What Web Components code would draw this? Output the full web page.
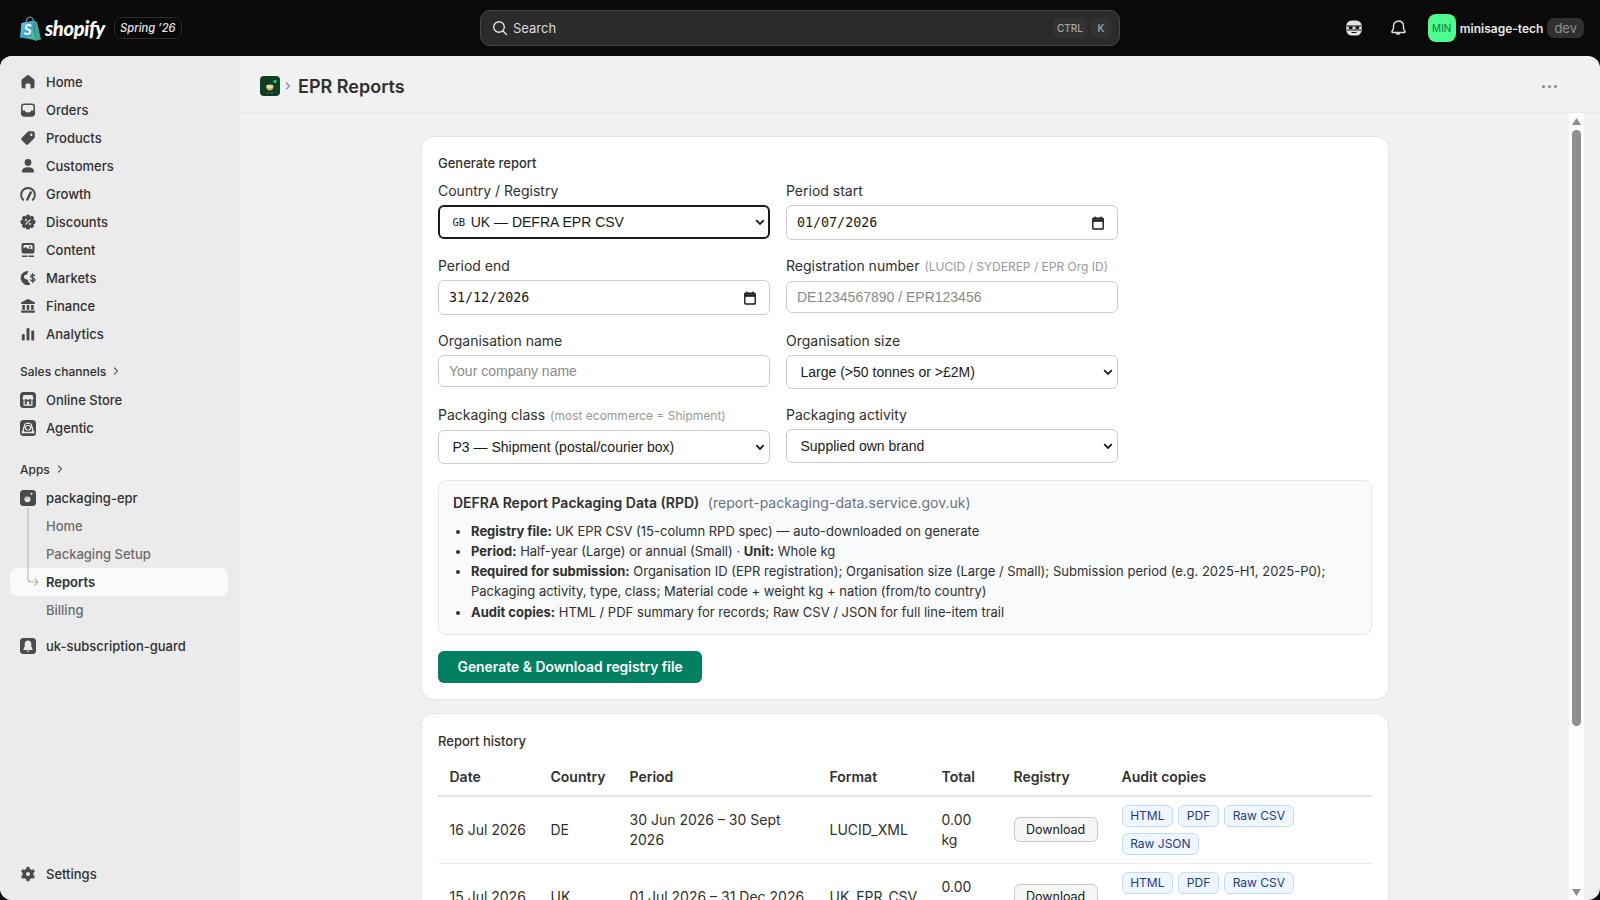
<!DOCTYPE html>
<html lang="en">
<head>
<meta charset="utf-8">
<title>EPR Reports</title>
<style>
  html, body { margin: 0; height: 100%; background: #0a0a0a; overflow: hidden; }
  body { font-family: Inter, "Liberation Sans", sans-serif; color: #303030; }
</style>
</head>
<body>
<admin-shell>
  <admin-topbar slot="top"></admin-topbar>
  <admin-nav slot="nav"></admin-nav>
  <admin-pageheader slot="header" title="EPR Reports"></admin-pageheader>

  <epr-card heading="Generate report">
    <epr-form>
      <epr-field label="Country / Registry"><epr-select focused flag="GB">UK — DEFRA EPR CSV</epr-select></epr-field>
      <epr-field label="Period start"><epr-date>01/07/2026</epr-date></epr-field>
      <epr-field label="Period end"><epr-date>31/12/2026</epr-date></epr-field>
      <epr-field label="Registration number" hint="(LUCID / SYDEREP / EPR Org ID)"><epr-input placeholder="DE1234567890 / EPR123456"></epr-input></epr-field>
      <epr-field label="Organisation name"><epr-input placeholder="Your company name"></epr-input></epr-field>
      <epr-field label="Organisation size"><epr-select>Large (&gt;50 tonnes or &gt;£2M)</epr-select></epr-field>
      <epr-field label="Packaging class" hint="(most ecommerce = Shipment)"><epr-select>P3 — Shipment (postal/courier box)</epr-select></epr-field>
      <epr-field label="Packaging activity"><epr-select>Supplied own brand</epr-select></epr-field>
    </epr-form>
    <epr-info heading="DEFRA Report Packaging Data (RPD)" source="(report-packaging-data.service.gov.uk)">
      <li><b>Registry file:</b> UK EPR CSV (15-column RPD spec) — auto-downloaded on generate</li>
      <li><b>Period:</b> Half-year (Large) or annual (Small) · <b>Unit:</b> Whole kg</li>
      <li><b>Required for submission:</b> Organisation ID (EPR registration); Organisation size (Large / Small); Submission period (e.g. 2025-H1, 2025-P0); Packaging activity, type, class; Material code + weight kg + nation (from/to country)</li>
      <li><b>Audit copies:</b> HTML / PDF summary for records; Raw CSV / JSON for full line-item trail</li>
    </epr-info>
    <epr-primary>Generate &amp; Download registry file</epr-primary>
  </epr-card>

  <epr-card heading="Report history" roomy>
    <epr-history></epr-history>
  </epr-card>
</admin-shell>

<script>
// 20x20 icons for the left nav
const gearTeeth = [0, 60, 120, 180, 240, 300].map(a => `<rect x="8.4" y="2.8" width="3.2" height="3.4" rx=".8" transform="rotate(${a} 10 10)"/>`).join('');
const discountLobes = [0, 45, 90, 135, 180, 225, 270, 315].map(a => `<circle cx="10" cy="4.6" r="2.2" transform="rotate(${a} 10 10)"/>`).join('');
const ICONS = {
  home: `<path d="M8.9 3.4a1.75 1.75 0 0 1 2.2 0l4.75 3.85c.41.33.65.83.65 1.36v5.64a2.25 2.25 0 0 1-2.25 2.25H12.5v-3.5a1.5 1.5 0 0 0-1.5-1.5H9a1.5 1.5 0 0 0-1.5 1.5v3.5H5.75A2.25 2.25 0 0 1 3.5 14.25V8.6c0-.53.24-1.03.65-1.36z"/>`,
  orders: `<rect x="3.75" y="4.25" width="12.5" height="11.5" rx="2.25" fill="none" stroke="currentColor" stroke-width="1.5"/><path d="M3.5 10.5h3.3c.3 1.3 1.6 2 3.2 2s2.9-.7 3.2-2h3.3v3.75a2.25 2.25 0 0 1-2.25 2.25h-8.5a2.25 2.25 0 0 1-2.25-2.25z"/>`,
  products: `<path fill-rule="evenodd" d="M11 3.2h4A1.8 1.8 0 0 1 16.8 5v4c0 .5-.2 1-.55 1.3l-5.9 5.9a1.8 1.8 0 0 1-2.55 0l-4-4a1.8 1.8 0 0 1 0-2.55l5.9-5.9c.35-.35.8-.55 1.3-.55zm2.3 2.3a1.2 1.2 0 1 0 0 2.4 1.2 1.2 0 0 0 0-2.4z"/>`,
  customers: `<circle cx="10" cy="6.4" r="3.4"/><path d="M4 15.2c0-2.4 2.6-3.9 6-3.9s6 1.500 6 3.900c0 .8-.6 1.300-1.300 1.300H5.300C4.600 16.500 4 16 4 15.200z"/>`,
  growth: `<path d="M5.200 15.800a6.900 6.900 0 1 1 9.600 0" fill="none" stroke="currentColor" stroke-width="1.900" stroke-linecap="round"/><path d="M9.300 15.600 12.800 8.400" fill="none" stroke="currentColor" stroke-width="2.400" stroke-linecap="round"/>`,
  discounts: `${discountLobes}<circle cx="10" cy="10" r="5.600"/><path d="M7.900 12.100l4.200-4.200" stroke="#ebebeb" stroke-width="1.200" stroke-linecap="round"/><circle cx="8" cy="8" r="1" fill="#ebebeb"/><circle cx="12" cy="12" r="1" fill="#ebebeb"/>`,
  content: `<path fill-rule="evenodd" d="M5.500 3h9a2 2 0 0 1 2 2v6.500a2 2 0 0 1-2 2h-9a2 2 0 0 1-2-2V5a2 2 0 0 1 2-2zm1 2a1 1 0 0 0-1 1v2.500l2.200-1.500 3 2 1.300-.8 2.500 1.600V6a1 1 0 0 0-1-1z"/><circle cx="11.800" cy="6.800" r=".9"/><path d="M4.500 16.200h4.500M11 16.200h4.500" stroke="currentColor" stroke-width="1.400" stroke-linecap="round"/>`,
  markets: `<path d="M9.500 3a7 7 0 1 0 2.700 13.500l-.5-1.400c-1-.4-1.700-1.300-1.700-2.500 0-.9-.7-1.100-1.600-1.300-1.500-.3-2.400-1.300-2.400-2.600 0-1.200.9-2 2-2 .9 0 1.500-.6 1.500-1.400 0-.7.300-1.300 1-1.700z"/><path d="M16.500 7.800c-.4-.7-1.100-1-1.900-1-1.100 0-1.900.6-1.900 1.500 0 2 4 1 4 3.100 0 .9-.9 1.600-2 1.600-.9 0-1.700-.4-2.100-1.100M14.700 5.600v9" fill="none" stroke="currentColor" stroke-width="1.300" stroke-linecap="round"/>`,
  finance: `<path d="M9.300 3.200a1.500 1.500 0 0 1 1.400 0l5.500 2.700c.5.300.8.700.8 1.300v.8H3v-.8c0-.6.300-1 .8-1.300z"/><rect x="4.300" y="9" width="2.600" height="4.800"/><rect x="8.700" y="9" width="2.600" height="4.800"/><rect x="13.100" y="9" width="2.600" height="4.800"/><rect x="3" y="14.500" width="14" height="2.200" rx=".8"/>`,
  analytics: `<rect x="3.800" y="10" width="2.900" height="6.500" rx="1.300"/><rect x="8.550" y="4" width="2.900" height="12.500" rx="1.300"/><rect x="13.300" y="6.500" width="2.900" height="10" rx=".8"/>`,
  store: `<rect x="2" y="2" width="16" height="16" rx="3.500"/><path d="M5.500 5h9l1 3.200c0 1-.8 1.500-1.700 1.500-.8 0-1.400-.4-1.900-1-.5.600-1.100 1-1.900 1s-1.400-.4-1.900-1c-.5.600-1.100 1-1.900 1-.9 0-1.700-.5-1.700-1.500z" fill="#ebebeb"/><path d="M5.500 10.300h1.200v4.200h2.100v-3h2.400v3h2.100v-4.200h1.200v5.400h-9z" fill="#ebebeb"/>`,
  agentic: `<rect x="2" y="2" width="16" height="16" rx="3.500"/><path d="M7.700 5.400h4.600M7 5.800l-2 7M13 5.800l2 7M6 14.500h8" fill="none" stroke="#ebebeb" stroke-width="1.300"/><rect x="7.500" y="7.500" width="5" height="4.500" rx="2" fill="none" stroke="#ebebeb" stroke-width="1.200"/><circle cx="5" cy="14" r="1.500" fill="#ebebeb"/><circle cx="15" cy="14" r="1.500" fill="#ebebeb"/>`,
  packaging: `<rect x="2" y="2" width="16" height="16" rx="3.500"/><circle cx="13.500" cy="5.800" r="1.100" fill="#ddd"/><path d="M6.300 10.500h6.400c0 2.400-1.300 3.800-3.200 3.800s-3.200-1.400-3.200-3.800z" fill="#ebebeb"/><ellipse cx="9.500" cy="10" rx="3" ry="1.400" fill="#ccc"/>`,
  bellapp: `<rect x="2" y="2" width="16" height="16" rx="3.500"/><path d="M10 4.500c-2 0-3.300 1.500-3.300 3.500v2.500L5.500 13c-.2.500.1 1 .7 1h7.600c.6 0 .9-.5.7-1l-1.200-2.500V8c0-2-1.300-3.500-3.300-3.500z" fill="#ebebeb"/><path d="M8.500 14.800h3c-.2.700-.8 1.100-1.500 1.100s-1.300-.4-1.500-1.100z" fill="#ebebeb"/>`,
  settings: `${gearTeeth}<path fill-rule="evenodd" d="M10 4.500a5.500 5.500 0 1 0 0 11 5.500 5.500 0 0 0 0-11zm0 3.500a2 2 0 1 1 0 4 2 2 0 0 1 0-4z"/>`
};

class AdminShell extends HTMLElement {
  constructor() {
    super();
    this.attachShadow({ mode: 'open' });
    this.shadowRoot.innerHTML = `
      <style>
        :host { display: flex; flex-direction: column; height: 900px; }
        .body { flex: 1; min-height: 0; display: flex; border-radius: 12px; overflow: hidden; background: #f1f1f1; }
        .main { flex: 1; min-width: 0; display: flex; flex-direction: column; }
        .frame { flex: 1; min-height: 0; display: flex; }
        .pane { flex: 1; min-width: 0; overflow: hidden; padding: 24px 181px 0 182px; display: flex; flex-direction: column; gap: 15px; }
        .bar { width: 15px; margin-right: 16px; flex: none; background: #fdfdfd; display: flex; flex-direction: column; align-items: center; }
        .thumb { width: 9px; height: 596px; margin-top: 5px; border-radius: 5px; background: #8f8f8f; }
        .arrow { width: 9px; height: 7px; background: #8f8f8f; flex: none; }
        .up { margin-top: 5px; clip-path: polygon(50% 0, 100% 100%, 0 100%); }
        .down { margin-top: auto; margin-bottom: 4px; clip-path: polygon(0 0, 100% 0, 50% 100%); }
      </style>
      <slot name="top"></slot>
      <div class="body">
        <slot name="nav"></slot>
        <div class="main">
          <slot name="header"></slot>
          <div class="frame">
            <div class="pane"><slot></slot></div>
            <div class="bar"><div class="arrow up"></div><div class="thumb"></div><div class="arrow down"></div></div>
          </div>
        </div>
      </div>
    `;
  }
}

class AdminTopbar extends HTMLElement {
  constructor() {
    super();
    this.attachShadow({ mode: 'open' });
    this.shadowRoot.innerHTML = `
      <style>
        :host { display: grid; grid-template-columns: 480px 640px 1fr; height: 56px; background: #0a0a0a; color: #e3e3e3; font-family: Inter, sans-serif; flex: none; }
        .brand { display: flex; align-items: center; padding-left: 20px; }
        .word { font-family: Lato, "Open Sans", sans-serif; font-weight: 900; font-style: italic; font-size: 20px; color: #fff; margin-left: 4px; letter-spacing: -.3px; }
        .season { margin-left: 9px; height: 20px; padding: 0 5px; display: flex; align-items: center; border: 1px solid #2b2b2b; border-radius: 7px; font-size: 11.200px; font-style: italic; font-weight: 500; color: #e3e3e3; }
        .search { align-self: center; height: 36px; box-sizing: border-box; background: #2b2b2b; border: 1px solid #454545; border-radius: 10px; display: flex; align-items: center; padding: 0 8px 0 11px; font-size: 13px; color: #dcdcdc; }
        .search svg { margin-right: 5px; }
        kbd { font: 500 10px Inter, sans-serif; color: #a8a8a8; background: #333; height: 20px; display: flex; align-items: center; justify-content: center; width: 34px; border-radius: 5px; margin-left: 4px; }
        kbd + kbd { width: 20px; }
        .grow { flex: 1; }
        .right { display: flex; align-items: center; justify-content: flex-end; padding-right: 16px; }
        .btn { width: 28px; height: 28px; display: flex; align-items: center; justify-content: center; }
        .avatar { width: 28px; height: 28px; border-radius: 8px; background: #4dfb8e; color: #0b7a42; font-size: 10px; display: flex; align-items: center; justify-content: center; margin-left: 16px; margin-right: 4px; }
        .name { font-size: 12px; font-weight: 600; color: #e8e8e8; }
        .tag { margin-left: 4px; height: 20px; padding: 0 7px; display: flex; align-items: center; border-radius: 7px; background: #303030; color: #8f8f8f; font-size: 13px; }
      </style>
      <div class="brand">
        <svg width="21" height="25" viewBox="0 0 21 25">
          <defs><linearGradient id="bag" x1="0" y1="0" x2="1" y2="1"><stop offset="0" stop-color="#7fd4f0"/><stop offset=".55" stop-color="#2f9fd8"/><stop offset="1" stop-color="#59c98a"/></linearGradient></defs>
          <path d="M6 7c0-3.500 2-6 4-6s3.500 2 3.500 5.500" fill="none" stroke="#8fa8b8" stroke-width="1.100"/>
          <path d="M1.500 7 14 4.500 15 24 0 21.500z" fill="url(#bag)"/>
          <path d="M14 4.500 17 6l4 17.500-6 1.500z" fill="#3aa98f"/>
          <text x="3.800" y="19" font-family="Lato, sans-serif" font-weight="900" font-style="italic" font-size="15" fill="#fff">S</text>
        </svg>
        <span class="word">shopify</span>
        <span class="season">Spring ’26</span>
      </div>
      <div class="search">
        <svg width="16" height="16" viewBox="0 0 16 16" fill="none" stroke="#e3e3e3" stroke-width="1.400" stroke-linecap="round"><circle cx="7" cy="7" r="5.300"/><path d="M11 11l3.500 3.500"/></svg>
        <span>Search</span><span class="grow"></span><kbd>CTRL</kbd><kbd>K</kbd>
      </div>
      <div class="right">
        <span class="btn" style="margin-right:16px">
          <svg width="18" height="18" viewBox="0 0 18 18"><rect x="1.300" y="1.500" width="15.400" height="15" rx="5.500" fill="#e3e3e3"/><path d="M1.800 7h14.400M1.800 11h14.400" stroke="#0a0a0a" stroke-width="1"/><rect x="3.800" y="7.300" width="3.800" height="2.800" rx="1" fill="#0a0a0a"/><rect x="10.400" y="7.300" width="3.800" height="2.800" rx="1" fill="#0a0a0a"/><path d="M6.500 13.500h5" stroke="#0a0a0a" stroke-width="1"/></svg>
        </span>
        <span class="btn">
          <svg width="20" height="20" viewBox="0 0 20 20" fill="none" stroke="#e3e3e3" stroke-width="1.400" stroke-linejoin="round"><path d="M10 3.200a4.500 4.500 0 0 0-4.500 4.500v2.200c0 .6-.2 1.200-.5 1.700l-1 1.700c-.3.500.1 1.200.7 1.200h11.600c.6 0 1-.7.7-1.200l-1-1.700c-.3-.5-.5-1.100-.5-1.700V7.700A4.500 4.500 0 0 0 10 3.200z"/><path d="M8.300 15a1.800 1.800 0 0 0 3.400 0" stroke-linecap="round"/></svg>
        </span>
        <span class="avatar">MIN</span>
        <span class="name">minisage-tech</span>
        <span class="tag">dev</span>
      </div>
    `;
  }
}

class NavIcon extends HTMLElement {
  constructor() {
    super();
    this.attachShadow({ mode: 'open' });
  }

  connectedCallback() {
    const name = this.getAttribute('name');
    this.shadowRoot.innerHTML = `
      <style>:host { display: block; width: 20px; height: 20px; flex: none; color: #4a4a4a; } svg { display: block; }</style>
      <svg width="20" height="20" viewBox="0 0 20 20" fill="currentColor">${ICONS[name] || ''}</svg>
    `;
  }
}

class NavItem extends HTMLElement {
  constructor() {
    super();
    this.attachShadow({ mode: 'open' });
  }

  connectedCallback() {
    const icon = this.getAttribute('icon');
    this.shadowRoot.innerHTML = `
      <style>
        :host { display: flex; align-items: center; gap: 8px; height: 28px; margin: 0 12px 0 10px; padding-left: 8px; border-radius: 8px; font-size: 13px; font-weight: 500; color: #303030; }
        :host([sub]) { padding-left: 36px; color: #6b6b6b; }
        :host([active]) { background: #fafafa; color: #303030; font-weight: 600; }
      </style>
      ${icon ? `<nav-icon name="${icon}"></nav-icon>` : ''}
      <slot></slot>
    `;
  }
}

class NavHeading extends HTMLElement {
  constructor() {
    super();
    this.attachShadow({ mode: 'open' });
    this.shadowRoot.innerHTML = `
      <style>
        :host { display: flex; align-items: center; gap: 6px; height: 26px; padding: 0 0 2px 20px; font-size: 12px; font-weight: 500; color: #303030; }
      </style>
      <slot></slot>
      <svg width="8" height="10" viewBox="0 0 8 10" fill="none" stroke="#616161" stroke-width="1.200" stroke-linecap="round" stroke-linejoin="round"><path d="M2.500 2l3 3-3 3"/></svg>
    `;
  }
}

class AdminNav extends HTMLElement {
  constructor() {
    super();
    this.attachShadow({ mode: 'open' });
    this.shadowRoot.innerHTML = `
      <style>
        :host { display: flex; flex-direction: column; width: 240px; flex: none; background: #ebebeb; padding: 12px 0; box-sizing: border-box; font-family: Inter, sans-serif; }
        .group { margin-top: 10px; }
        .group.apps { margin-top: 14px; }
        .tree { position: relative; }
        .tree svg { position: absolute; left: 26px; top: -4px; }
        .extra { margin-top: 8px; }
        .bottom { margin-top: auto; }
      </style>
      <nav-item icon="home">Home</nav-item>
      <nav-item icon="orders">Orders</nav-item>
      <nav-item icon="products">Products</nav-item>
      <nav-item icon="customers">Customers</nav-item>
      <nav-item icon="growth">Growth</nav-item>
      <nav-item icon="discounts">Discounts</nav-item>
      <nav-item icon="content">Content</nav-item>
      <nav-item icon="markets">Markets</nav-item>
      <nav-item icon="finance">Finance</nav-item>
      <nav-item icon="analytics">Analytics</nav-item>
      <div class="group">
        <nav-heading>Sales channels</nav-heading>
        <nav-item icon="store">Online Store</nav-item>
        <nav-item icon="agentic">Agentic</nav-item>
      </div>
      <div class="group apps">
        <nav-heading>Apps</nav-heading>
        <nav-item icon="packaging">packaging-epr</nav-item>
        <div class="tree">
          <nav-item sub>Home</nav-item>
          <nav-item sub>Packaging Setup</nav-item>
          <nav-item sub active>Reports</nav-item>
          <nav-item sub>Billing</nav-item>
          <svg width="16" height="80" viewBox="0 0 16 80" fill="none" stroke="#b5b5b5" stroke-width="1.100" stroke-linecap="round" stroke-linejoin="round"><path d="M2 0v71a3 3 0 0 0 3 3h7M9 71l3 3-3 3"/></svg>
        </div>
      </div>
      <nav-item class="extra" icon="bellapp">uk-subscription-guard</nav-item>
      <nav-item class="bottom" icon="settings">Settings</nav-item>
    `;
  }
}

class AdminPageheader extends HTMLElement {
  constructor() {
    super();
    this.attachShadow({ mode: 'open' });
  }

  connectedCallback() {
    this.shadowRoot.innerHTML = `
      <style>
        :host { display: flex; align-items: center; height: 52px; padding: 4px 43px 0 20px; border-bottom: 1px solid #e6e6e6; font-family: Inter, sans-serif; flex: none; }
        h1 { margin: 0; font-size: 18px; font-weight: 600; color: #303030; }
        .sep { margin: 0 6px 0 4px; display: flex; }
        .more { margin-left: auto; display: flex; gap: 3px; }
        .more i { width: 3px; height: 3px; border-radius: 50%; background: #8a8a8a; }
      </style>
      <svg width="20" height="20" viewBox="0 0 20 20"><rect width="20" height="20" rx="4" fill="#0e3d24"/><circle cx="15" cy="5.500" r="1.800" fill="#22c55e"/><path d="M6.200 10.800h7.200c0 2.400-1.500 3.600-3.600 3.600s-3.600-1.200-3.600-3.600z" fill="#d4b96a"/><ellipse cx="9.800" cy="10.300" rx="3.600" ry="1.800" fill="#e9dca8"/><path d="M6.500 17h2M10.500 17h3" stroke="#7a9a6a" stroke-width=".6"/></svg>
      <span class="sep"><svg width="8" height="12" viewBox="0 0 8 12" fill="none" stroke="#8a8a8a" stroke-width="1.100" stroke-linecap="round" stroke-linejoin="round"><path d="M2.500 3l3 3-3 3"/></svg></span>
      <h1>${this.getAttribute('title')}</h1>
      <span class="more"><i></i><i></i><i></i></span>
    `;
  }
}

class EprCard extends HTMLElement {
  constructor() {
    super();
    this.attachShadow({ mode: 'open' });
  }

  connectedCallback() {
    this.shadowRoot.innerHTML = `
      <style>
        :host { display: block; flex: none; background: #fff; border-radius: 12px; padding: 16px; box-shadow: 0 0 0 1px #e8e8e8, 0 1px 1px rgba(0,0,0,.16); font-family: Inter, sans-serif; color: #303030; }
        :host([roomy]) { padding-top: 17.500px; }
        h2 { margin: 0 0 8px; font-size: 13px; line-height: 20px; font-weight: 550; }
      </style>
      <h2>${this.getAttribute('heading')}</h2>
      <slot></slot>
    `;
  }
}

class EprForm extends HTMLElement {
  constructor() {
    super();
    this.attachShadow({ mode: 'open' });
    this.shadowRoot.innerHTML = `
      <style>:host { display: grid; grid-template-columns: 332px 332px; column-gap: 16px; row-gap: 16px; align-items: start; }</style>
      <slot></slot>
    `;
  }
}

class EprField extends HTMLElement {
  constructor() {
    super();
    this.attachShadow({ mode: 'open' });
  }

  connectedCallback() {
    const hint = this.getAttribute('hint');
    this.shadowRoot.innerHTML = `
      <style>
        :host { display: block; }
        label { display: block; margin-bottom: 4px; font-size: 14px; line-height: 20px; }
        small { font-size: 12px; color: #999; margin-left: 1px; }
      </style>
      <label>${this.getAttribute('label')}${hint ? ` <small>${hint}</small>` : ''}</label>
      <slot></slot>
    `;
  }
}

class EprSelect extends HTMLElement {
  constructor() {
    super();
    this.attachShadow({ mode: 'open' });
  }

  connectedCallback() {
    const flag = this.getAttribute('flag');
    this.shadowRoot.innerHTML = `
      <style>
        :host { display: flex; align-items: center; box-sizing: border-box; height: 34px; padding: 0 4px 0 13.500px; border: 1px solid #c9cccf; border-radius: 6px; background: #fff; font: 14px "Liberation Sans", Arial, sans-serif; color: #1a1a1a; }
        :host([focused]) { border: 2px solid #1a1a1a; padding-left: 12.500px; padding-right: 3px; }
        .flag { font: 10.500px "DejaVu Sans Mono", monospace; margin-right: 5.500px; }
        .grow { flex: 1; }
      </style>
      ${flag ? `<span class="flag">${flag}</span>` : ''}
      <slot></slot><span class="grow"></span>
      <svg width="10" height="7" viewBox="0 0 10 7" fill="none" stroke="#1a1a1a" stroke-width="1.800"><path d="M1.200 1.200 5 5l3.800-3.800"/></svg>
    `;
  }
}

class EprDate extends HTMLElement {
  constructor() {
    super();
    this.attachShadow({ mode: 'open' });
    this.shadowRoot.innerHTML = `
      <style>
        :host { display: flex; align-items: center; box-sizing: border-box; height: 35px; padding: 0 13px 0 10px; border: 1px solid #c9cccf; border-radius: 6px; background: #fff; font: 13.330px "DejaVu Sans Mono", monospace; color: #1a1a1a; }
        .grow { flex: 1; }
      </style>
      <slot></slot><span class="grow"></span>
      <svg width="12" height="14" viewBox="0 0 12 14" fill="none" stroke="#1a1a1a"><rect x=".8" y="2.200" width="10.400" height="10.800" rx=".8" stroke-width="1.400"/><path d="M.8 4.500h10.400" stroke-width="2.600"/><path d="M3 .5v2M9 .5v2" stroke-width="1.200"/></svg>
    `;
  }
}

class EprInput extends HTMLElement {
  constructor() {
    super();
    this.attachShadow({ mode: 'open' });
  }

  connectedCallback() {
    this.shadowRoot.innerHTML = `
      <style>
        :host { display: block; }
        input { display: block; width: 100%; height: 32px; box-sizing: border-box; padding: 0 10px; border: 1px solid #c9cccf; border-radius: 6px; background: #fff; font: 14px "Liberation Sans", Arial, sans-serif; color: #1a1a1a; outline: none; }
        input::placeholder { color: #8a8a8a; opacity: 1; }
      </style>
      <input type="text" placeholder="${this.getAttribute('placeholder')}">
    `;
  }
}

class EprInfo extends HTMLElement {
  constructor() {
    super();
    this.attachShadow({ mode: 'open' });
  }

  connectedCallback() {
    this.shadowRoot.innerHTML = `
      <style>
        :host { display: block; margin-top: 16px; padding: 12px 14px 12px; background: #f8fafc; border: 1px solid #e2e8f0; border-radius: 8px; }
        .title { font-size: 14px; line-height: 20px; font-weight: 600; margin-bottom: 8px; }
        .title span { font-weight: 400; color: #6b7280; margin-left: 5px; letter-spacing: .04px; }
        ul { margin: 0; padding: 0 0 0 18px; font-size: 13px; line-height: 20.150px; }
      </style>
      <div class="title">${this.getAttribute('heading')} <span>${this.getAttribute('source')}</span></div>
      <ul><slot></slot></ul>
    `;
  }
}

class EprPrimary extends HTMLElement {
  constructor() {
    super();
    this.attachShadow({ mode: 'open' });
    this.shadowRoot.innerHTML = `
      <style>
        :host { display: inline-flex; align-items: center; height: 32px; margin-top: 16px; padding: 0 19.500px; background: #008060; color: #fff; border-radius: 6px; font-size: 13.900px; font-weight: 600; }
      </style>
      <slot></slot>
    `;
  }
}

class EprPill extends HTMLElement {
  constructor() {
    super();
    this.attachShadow({ mode: 'open' });
    this.shadowRoot.innerHTML = `
      <style>
        :host { display: inline-flex; align-items: center; box-sizing: border-box; height: 22px; padding: 0 7.700px; background: #eff6ff; border: 1px solid #bfdbfe; border-radius: 6px; color: #1e3a8a; font-size: 12px; }
      </style>
      <slot></slot>
    `;
  }
}

class EprHistory extends HTMLElement {
  constructor() {
    super();
    this.attachShadow({ mode: 'open' });
    const rows = [
      ['16 Jul 2026', 'DE', '30 Jun 2026 – 30 Sept 2026', 'LUCID_XML', '0.00 kg'],
      ['15 Jul 2026', 'UK', '01 Jul 2026 – 31 Dec 2026', 'UK_EPR_CSV', '0.00 kg']
    ];
    const body = rows.map(r => `
      <tr>
        ${r.map(c => `<td>${c}</td>`).join('')}
        <td><span class="dl">Download</span></td>
        <td><div class="pills"><epr-pill>HTML</epr-pill><epr-pill>PDF</epr-pill><epr-pill>Raw CSV</epr-pill><epr-pill>Raw JSON</epr-pill></div></td>
      </tr>`).join('');
    this.shadowRoot.innerHTML = `
      <style>
        :host { display: block; font-size: 14px; }
        table { width: 100%; table-layout: fixed; border-collapse: collapse; }
        th { text-align: left; font-weight: 600; font-size: 14px; line-height: 20px; padding: 7.500px 10px 8px 11.500px; border-bottom: 2px solid #e3e3e3; }
        td { padding: 8px 10px 8px 11.500px; line-height: 20px; border-bottom: 1px solid #ececec; vertical-align: middle; }
        td:nth-child(5) { padding-right: 16px; }
        .dl { display: inline-flex; align-items: center; box-sizing: border-box; height: 25px; padding: 0 11.500px; background: #f6f6f6; border: 1px solid #c9c9c9; border-radius: 6px; font-size: 12.500px; color: #1a1a1a; }
        .pills { display: flex; flex-wrap: wrap; gap: 6px 5px; width: 190px; }
      </style>
      <table>
        <colgroup><col style="width:101px"><col style="width:79px"><col style="width:200px"><col style="width:112px"><col style="width:72px"><col style="width:108px"><col></colgroup>
        <thead><tr><th>Date</th><th>Country</th><th>Period</th><th>Format</th><th>Total</th><th>Registry</th><th>Audit copies</th></tr></thead>
        <tbody>${body}</tbody>
      </table>
    `;
  }
}

customElements.define('nav-icon', NavIcon);
customElements.define('nav-item', NavItem);
customElements.define('nav-heading', NavHeading);
customElements.define('admin-nav', AdminNav);
customElements.define('admin-topbar', AdminTopbar);
customElements.define('admin-pageheader', AdminPageheader);
customElements.define('admin-shell', AdminShell);
customElements.define('epr-card', EprCard);
customElements.define('epr-form', EprForm);
customElements.define('epr-field', EprField);
customElements.define('epr-select', EprSelect);
customElements.define('epr-date', EprDate);
customElements.define('epr-input', EprInput);
customElements.define('epr-info', EprInfo);
customElements.define('epr-primary', EprPrimary);
customElements.define('epr-pill', EprPill);
customElements.define('epr-history', EprHistory);
</script>
</body>
</html>
